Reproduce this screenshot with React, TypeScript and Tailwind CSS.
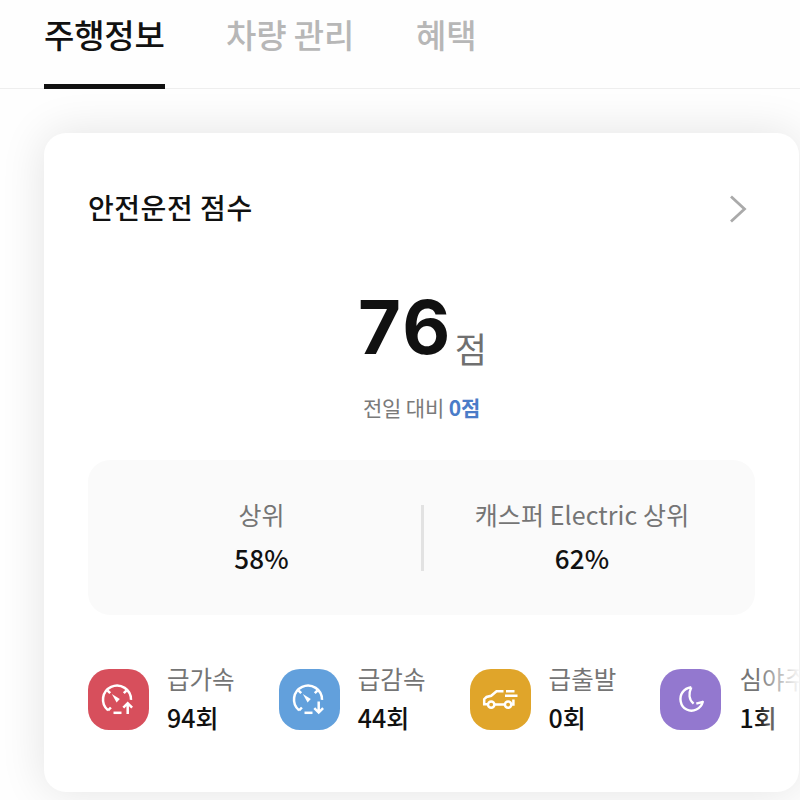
import type { ReactNode } from 'react';

function Gauge({ down }: { down?: boolean }) {
  return (
    <svg className="mr-[3px] size-[34px]" viewBox="0 0 34 34" fill="none" stroke="white" strokeWidth="2.5">
      <path d="M8.1 28.4A14 14 0 1 1 31 17.9" />
      <path d="M8.1 28.4l2.8-2.9M7.6 8.6l2.6 2.6M26.4 8.6l-2.6 2.6" />
      <path d="M11.8 11.9l8 5.2-3.2 3.4z" fill="white" stroke="none" />
      <path d="M13.5 30.8h8" />
      {down ? (
        <path d="M27.7 19.5v10.8M23.3 26.2l4.4 4.4 4.4-4.4" />
      ) : (
        <path d="M27.7 32V21.8M23.3 25.6l4.4-4.4 4.4 4.4" />
      )}
    </svg>
  );
}

function Car() {
  return (
    <svg className="mr-[1px] size-[36px]" viewBox="0 0 36 36" fill="none" stroke="white" strokeWidth="2.5">
      <path d="M21.5 10.2h-7l-5.3 4.6-4.7 1.2-2.3 2.2v5h3.4M12.6 23.6h10M29.4 23.6h2v-5" />
      <circle cx="9.2" cy="23.6" r="3.2" />
      <circle cx="26.1" cy="23.6" r="3.2" />
      <path d="M24 10.2h8.5M23 14.8h12.5" />
    </svg>
  );
}

function Moon() {
  return (
    <svg className="size-[34px]" viewBox="0 0 34 34" fill="none" stroke="white" strokeWidth="2.4" strokeLinejoin="round">
      <path d="M17.3 5.2C9.4 6.4 5.4 12.6 6.7 19.4C8.2 27.2 15.8 30.6 22.4 27.5C25.9 25.8 28 23 28.8 19.8L22.3 21.7M17.3 5.2C14.4 11.5 15 18 19.6 21.6" />
    </svg>
  );
}

const items: { label: string; value: string; color: string; icon: ReactNode }[] = [
  { label: '급가속', value: '94회', color: 'bg-[#d74f5c]', icon: <Gauge /> },
  { label: '급감속', value: '44회', color: 'bg-[#62a0dc]', icon: <Gauge down /> },
  { label: '급출발', value: '0회', color: 'bg-[#e0a52a]', icon: <Car /> },
  { label: '심야주', value: '1회', color: 'bg-[#9378cf]', icon: <Moon /> },
];

export default function App() {
  return (
    <div className="h-[800px] w-[800px] overflow-hidden bg-[#fefefe] font-['Noto_Sans_CJK_KR',sans-serif] whitespace-nowrap text-[#111]">
      <nav className="relative flex h-[89px] items-start border-b border-[#eeeeee] bg-[#fefefe] pl-[44px] text-[33px] leading-[68px] font-medium">
        <div className="h-[89px] w-[121px] border-b-[5px] border-[#111] tracking-[-0.2px]">주행정보</div>
        <div className="ml-[61px] w-[190px] tracking-[-0.1px] text-[#b7b7b7]">차량 관리</div>
        <div className="text-[#b7b7b7]">혜택</div>
      </nav>
      <main className="mt-[44px] ml-[44px] h-[659px] w-[755px] overflow-hidden rounded-[22px] bg-white shadow-[0_0_46px_rgba(0,0,0,0.11)]">
        <header className="flex h-[152px] items-center justify-between pr-[52px] pl-[44px]">
          <h1 className="pb-[4px] text-[28px] leading-[40px] font-medium tracking-[0.55px]">안전운전 점수</h1>
          <svg className="h-[28px] w-[18px]" viewBox="0 0 18 28" fill="none" stroke="#aaaaaa" strokeWidth="2.8">
            <path d="M2 1.5L15.5 14L2 26.5" />
          </svg>
        </header>
        <section className="flex h-[102px] items-start justify-center">
          <span className="pl-[2px] text-[74px] leading-[84px] font-bold tracking-[2.5px] font-[Inter,sans-serif]">76</span>
          <span className="ml-[2px] pt-[39px] text-[35px] leading-[48px] font-normal text-[#707070]">점</span>
        </section>
        <p className="h-[73px] text-center text-[21px] leading-[40px] font-normal tracking-[-0.15px] text-[#7a7a7a]">
          전일 대비 <b className="font-bold text-[#4a7cc8]">0점</b>
        </p>
        <section className="mx-[44px] flex h-[155px] w-[667px] items-center rounded-[22px] bg-[#fafafa] pb-[4px] text-center">
          <div className="w-[333px] pl-[14px]">
            <div className="text-[25px] leading-[44px] font-normal text-[#757575]">상위</div>
            <div className="text-[26px] leading-[44px] font-medium tracking-[0.2px]">58%</div>
          </div>
          <div className="mt-[4px] h-[66px] w-[3px] bg-[#e2e2e2]" />
          <div className="w-[331px] pr-[15px]">
            <div className="text-[25px] leading-[44px] font-normal tracking-[0.1px] text-[#757575]">캐스퍼 Electric 상위</div>
            <div className="text-[26px] leading-[44px] font-medium tracking-[0.2px]">62%</div>
          </div>
        </section>
        <section className="relative flex pt-[45px] pl-[44px]">
          {items.map((item) => (
            <div key={item.label} className="flex w-[190.8px] shrink-0 items-center">
              <div className="mt-[2px] shrink-0">
                <div className={`flex h-[61px] w-[61px] items-center justify-center rounded-[21px] ${item.color}`}>
                  {item.icon}
                </div>
              </div>
              <div className="ml-[18px]">
                <div className="text-[24.5px] leading-[38px] font-normal text-[#757575]">{item.label}</div>
                <div className="text-[25px] leading-[38px] font-medium">{item.value}</div>
              </div>
            </div>
          ))}
          <div className="absolute top-[30px] right-0 h-[110px] w-[42px] bg-linear-to-r from-white/0 to-white/95" />
        </section>
      </main>
    </div>
  );
}
